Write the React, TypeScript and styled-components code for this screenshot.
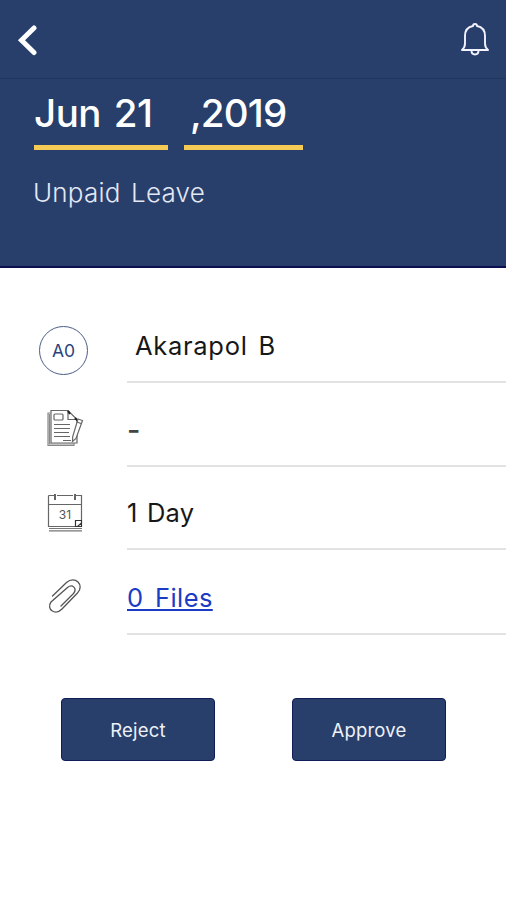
import React from "react";
import styled, { createGlobalStyle } from "styled-components";

const GlobalStyle = createGlobalStyle`
  * { box-sizing: border-box; }
  body { margin: 0; background: #fff; }
  button { font-family: inherit; }
`;

const Screen = styled.main`
  width: 100%;
  height: 900px;
  overflow: hidden;
  background: #fff;
  font-family: Inter, "Noto Sans", sans-serif;
`;

const Header = styled.header`
  height: 268px;
  background: #283f6b;
  border-bottom: 2px solid #0a0f50;
  color: #fff;
`;

const TopBar = styled.nav`
  display: flex;
  justify-content: space-between;
  align-items: center;
  height: 79px;
  padding: 0 15px 0 16px;
  border-bottom: 1px solid #203660;
`;

const IconButton = styled.button`
  display: flex;
  padding: 0;
  border: 0;
  background: none;
  color: inherit;
`;

const DateRow = styled.div`
  display: flex;
  gap: 16px;
  padding: 11px 0 0 34px;
`;

const DatePart = styled.div<{ $width: number; $indent: number; $tracking: number; $gap: number }>`
  width: ${(p) => p.$width}px;
  height: 60px;
  padding-left: ${(p) => p.$indent}px;
  border-bottom: 5px solid #f5ca55;
  font-size: 38.5px;
  font-weight: 500;
  line-height: 47px;
  letter-spacing: ${(p) => p.$tracking}px;
  word-spacing: ${(p) => p.$gap}px;
  white-space: nowrap;
`;

const LeaveType = styled.div`
  padding: 25px 0 0 33px;
  color: #e4e8f4;
  font-size: 26px;
  font-weight: 300;
  line-height: 36px;
  letter-spacing: 0.2px;
  word-spacing: 3px;
`;

const Details = styled.section`
  display: grid;
  grid-template-rows: 115px 84px 83px 85px;
`;

const Row = styled.div`
  display: grid;
  grid-template-columns: 127px 1fr;
`;

const IconCell = styled.div<{ $top: number; $left: number }>`
  padding: ${(p) => p.$top}px 0 0 ${(p) => p.$left}px;

  svg { display: block; }
`;

const Value = styled.div<{ $indent?: number; $tracking?: number; $gap?: number }>`
  display: flex;
  align-items: flex-end;
  padding: 0 0 17px ${(p) => p.$indent ?? 0}px;
  border-bottom: 2px solid #e2e2e2;
  color: #171717;
  font-size: 25.5px;
  line-height: 36px;
  letter-spacing: ${(p) => p.$tracking ?? 0}px;
  word-spacing: ${(p) => p.$gap ?? 0}px;
  white-space: pre;
`;

const EmptyValue = styled.span`
  font-size: 29px;
  font-weight: 500;
  color: #444;
`;

const Avatar = styled.div`
  display: grid;
  place-items: center;
  width: 49px;
  height: 49px;
  border: 1.5px solid #4b5d86;
  border-radius: 50%;
  color: #2b437d;
  font-size: 17.5px;
  line-height: 20px;
`;

const FilesLink = styled.a`
  color: #1b3bc4;
  text-decoration: underline;
  text-decoration-thickness: 2px;
  text-underline-offset: 2px;
  text-decoration-skip-ink: none;
`;

const Actions = styled.div`
  display: flex;
  gap: 77px;
  padding: 63px 0 0 61px;
`;

const ActionButton = styled.button`
  width: 154px;
  height: 63px;
  padding: 0;
  border: 1px solid #121d58;
  border-radius: 4px;
  background: #283f6b;
  color: #eef1f8;
  font-size: 18.5px;
  letter-spacing: 0.2px;
`;

const BackIcon = () => (
  <svg width="22" height="34" viewBox="0 0 22 34" fill="none" stroke="#fff" strokeWidth="5" strokeLinecap="round">
    <path d="M18 6 5.500 18.200 18 30.500" strokeLinejoin="miter" />
  </svg>
);

const BellIcon = () => (
  <svg width="32" height="36" viewBox="0 0 32 36" fill="none" stroke="#f3f3ff" strokeWidth="1.9" strokeLinejoin="round">
    <path d="M14 5a2 2 0 0 1 4 0c5.500 1 8 4.700 8 10v7.500c0 3 .8 4.500 3 6.500H3c2.200-2 3-3.500 3-6.500V15c0-5.300 2.500-9 8-10Z" />
    <path d="M12.500 29.500c0 5.300 7 5.300 7 0" />
  </svg>
);

const NoteIcon = () => (
  <svg width="38" height="39" viewBox="0 0 38 39" fill="none" stroke="#666" strokeWidth="1.2">
    <path d="M5 1.500h17l9 9V34H5Z" />
    <path d="M5 4H2v32.500h26V34M3.500 5v30H28" stroke="#888" />
    <path d="M22 1.500v9h9" />
    <path d="m22 2 2 3m5 4 3 3" stroke="#222" strokeWidth="2" />
    <rect x="8" y="5" width="9" height="6" rx="1" />
    <path d="M8 15.500h16M8 19.500h16M8 23.500h15M8 27.500h16M17 31.500h8" />
    <path d="m32 10 4.500 1.500-6.500 18-3.500 3 .2-5Z" fill="#fff" />
    <path d="m31 13 4 1.500" />
  </svg>
);

const CalendarIcon = () => (
  <svg width="36" height="39" viewBox="0 0 36 39" fill="none" stroke="#666" strokeWidth="1.200">
    <path d="M1.500 2.500H7m3 0h16m3 0h5.500v25M1.500 2.500v31H28M1.500 11.500h33" />
    <path d="M8 1v6M28 1v6" stroke="#333" strokeWidth="1.500" />
    <path d="M28.500 33.500V27.500h6V30l-4 3.500Zm0 0h6v-5" stroke="#333" />
    <path d="M2 35.500h33M2 37.800h33" stroke="#777" />
    <text x="18" y="26" textAnchor="middle" fill="#555" stroke="none" fontFamily="Inter" fontSize="12">31</text>
  </svg>
);

const ClipIcon = () => (
  <svg width="34" height="37" viewBox="0 0 34 37" fill="none" stroke="#555" strokeWidth="1.300" strokeLinecap="round">
    <path d="M4.500 18 18.500 4.500C27-3 37 7 29.500 15L14 31C7 38-2 31 3 24L19.500 9.500c5-4 10 1 6 6L13 28" />
  </svg>
);

export default function App() {
  return (
    <Screen>
      <GlobalStyle />
      <Header>
        <TopBar>
          <IconButton aria-label="Back"><BackIcon /></IconButton>
          <IconButton aria-label="Notifications"><BellIcon /></IconButton>
        </TopBar>
        <DateRow>
          <DatePart $width={134} $indent={0} $tracking={-0.5} $gap={3}>Jun 21</DatePart>
          <DatePart $width={119} $indent={6} $tracking={-0.8} $gap={0}>,2019</DatePart>
        </DateRow>
        <LeaveType>Unpaid Leave</LeaveType>
      </Header>
      <Details>
        <Row>
          <IconCell $top={58} $left={39}><Avatar>A0</Avatar></IconCell>
          <Value $indent={8} $tracking={0.7} $gap={3}>Akarapol B</Value>
        </Row>
        <Row>
          <IconCell $top={26} $left={46}><NoteIcon /></IconCell>
          <Value><EmptyValue>-</EmptyValue></Value>
        </Row>
        <Row>
          <IconCell $top={26} $left={47}><CalendarIcon /></IconCell>
          <Value $tracking={0.2} $gap={2}>1 Day</Value>
        </Row>
        <Row>
          <IconCell $top={28} $left={48}><ClipIcon /></IconCell>
          <Value $tracking={0.4} $gap={4}><FilesLink>0 Files</FilesLink></Value>
        </Row>
      </Details>
      <Actions>
        <ActionButton>Reject</ActionButton>
        <ActionButton>Approve</ActionButton>
      </Actions>
    </Screen>
  );
}
